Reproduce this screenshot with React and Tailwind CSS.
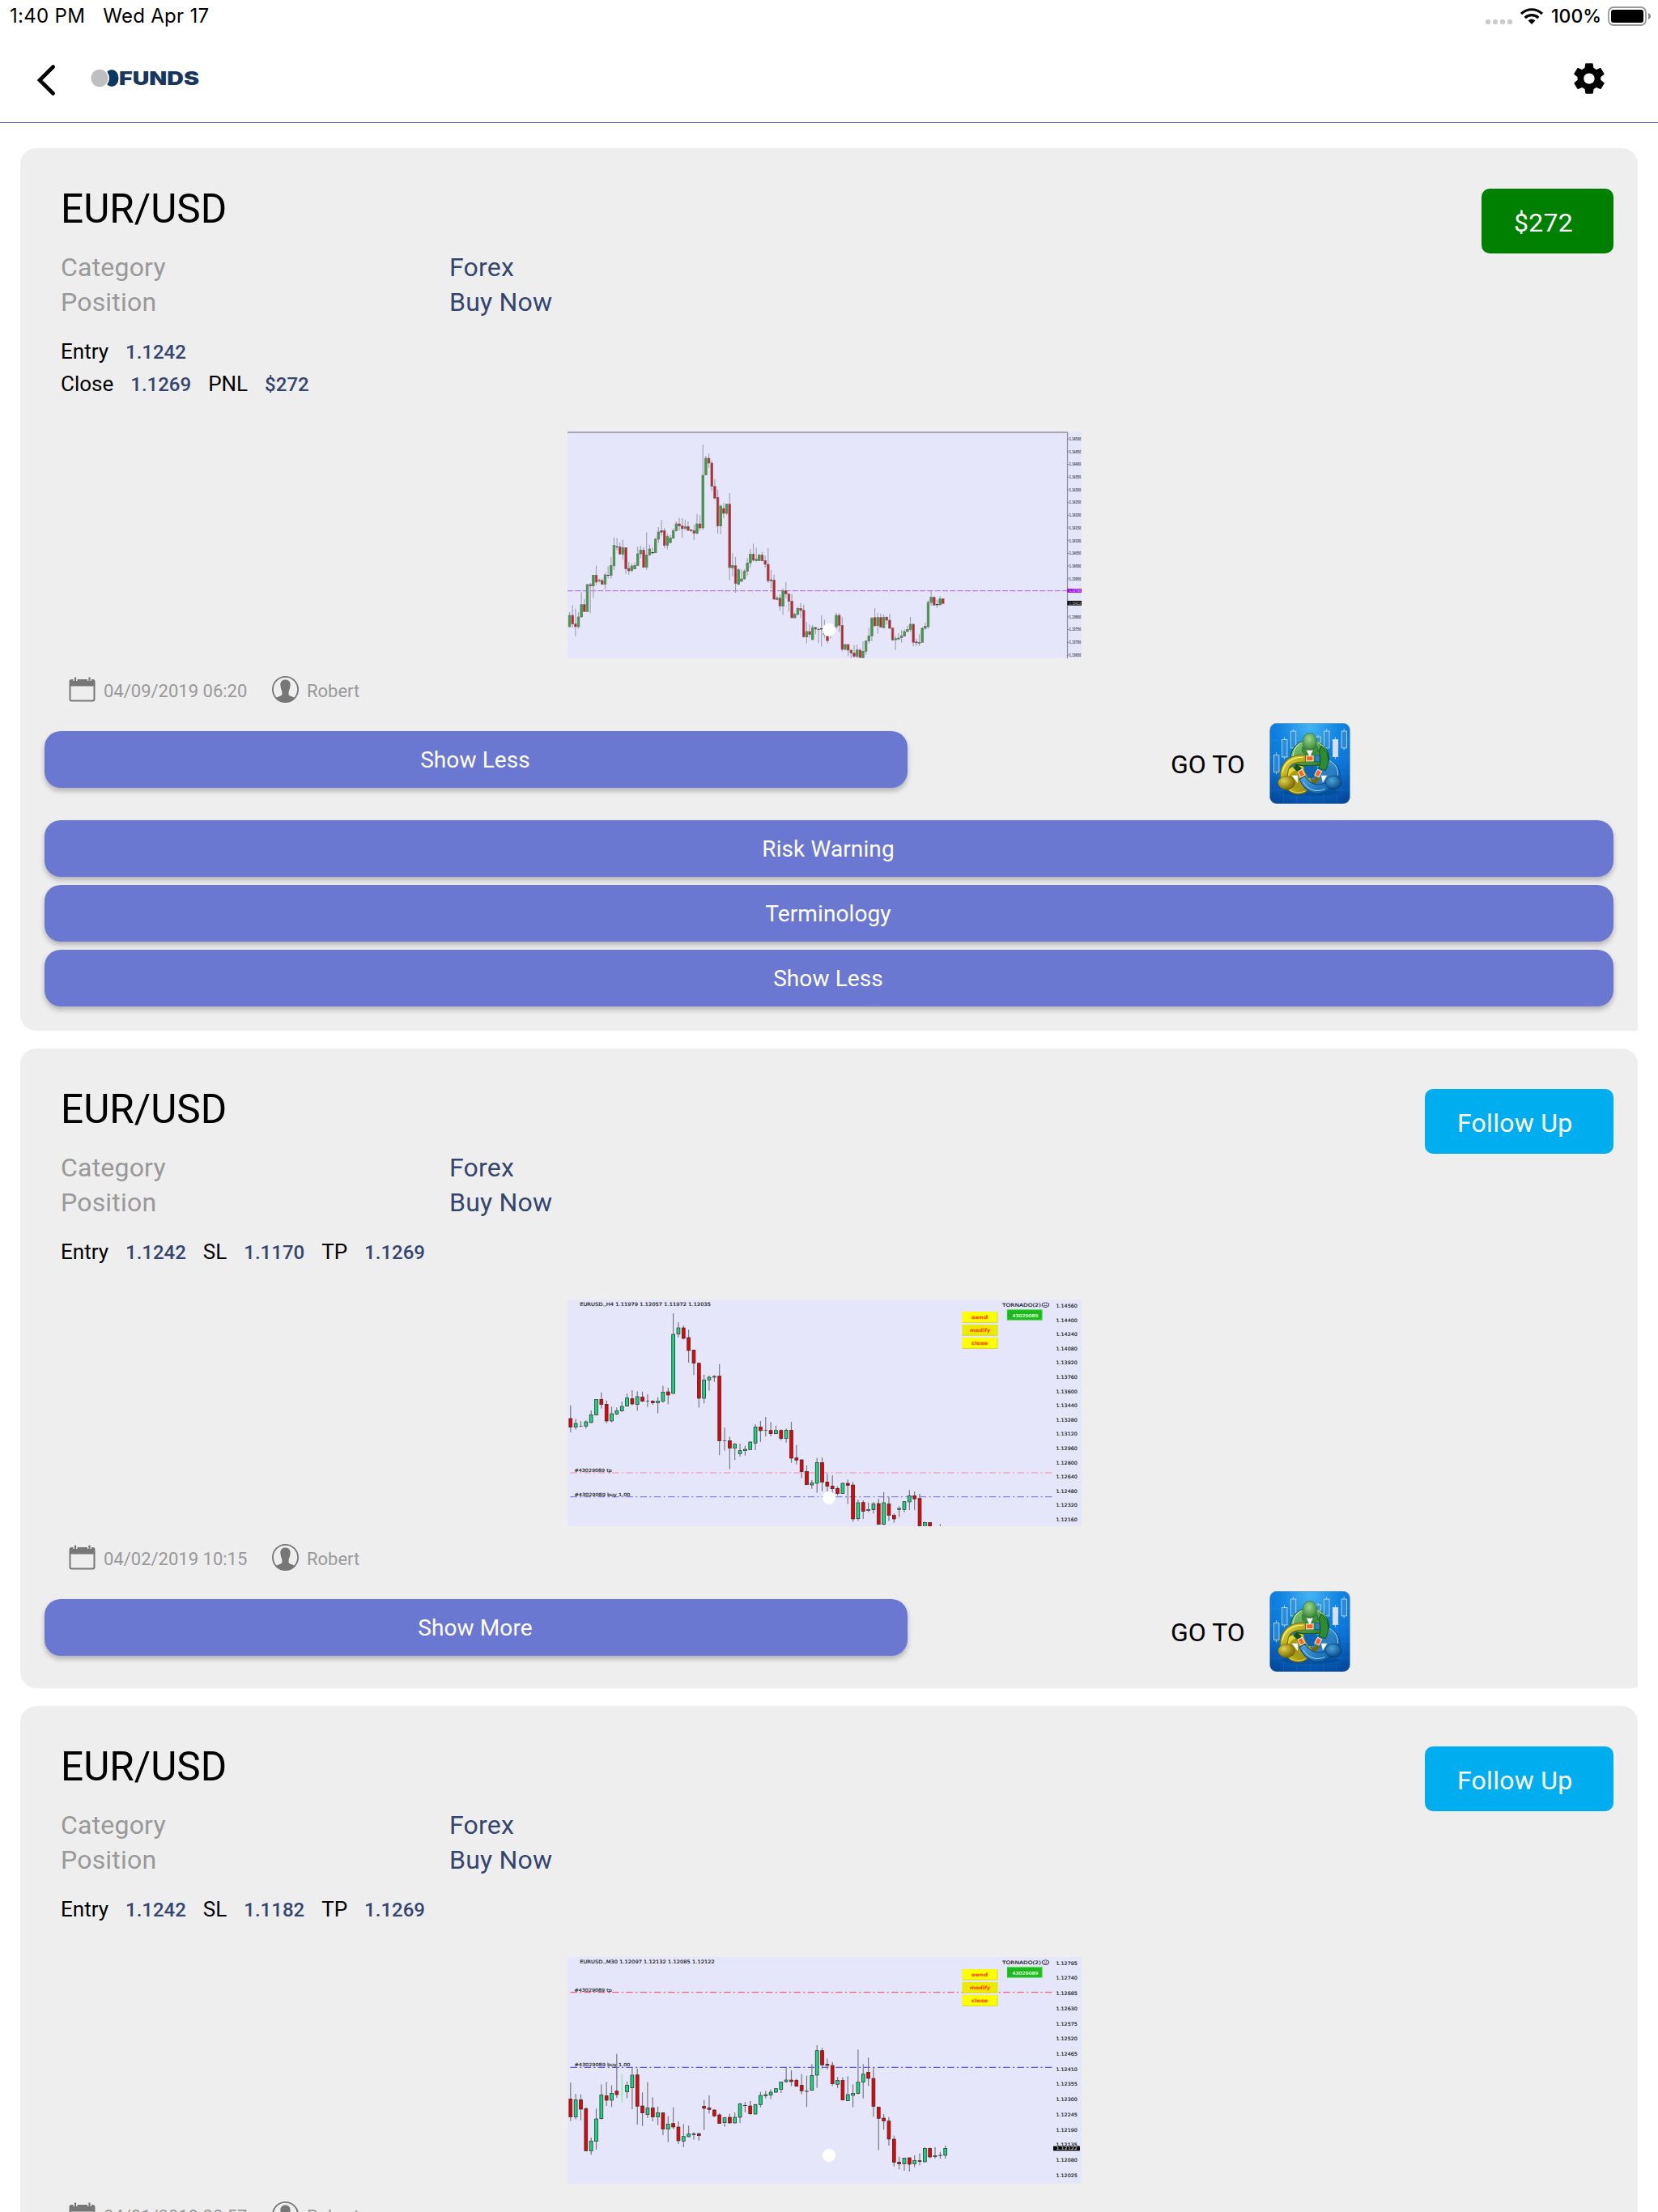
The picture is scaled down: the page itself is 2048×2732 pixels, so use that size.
import React from 'react';
import { IoMdSettings } from 'react-icons/io';

const axisLabels = (from, step, count) =>
    [...Array(count)].map((_, i) => (from - step * i).toFixed(5));

// candles: [colour, high, body top, body bottom, low]
const closedCandles = [
    ['g', 708, 720, 762, 765], ['r', 682, 720, 752, 765], ['r', 695, 752, 762, 798], ['g', 708, 726, 762, 770],
    ['g', 634, 680, 726, 728], ['r', 660, 680, 706, 708], ['g', 603, 606, 706, 708], ['r', 600, 606, 611, 712],
    ['g', 570, 571, 611, 656], ['r', 536, 571, 597, 608], ['g', 584, 590, 593, 598], ['r', 584, 591, 605, 607],
    ['g', 562, 570, 605, 624], ['k', 538, 570, 573, 584], ['g', 504, 535, 572, 584], ['g', 431, 460, 536, 552],
    ['k', 434, 465, 468, 480], ['r', 450, 466, 493, 495], ['g', 440, 469, 493, 514], ['r', 468, 469, 548, 566],
    ['r', 522, 546, 555, 570], ['g', 528, 537, 554, 560], ['g', 524, 535, 548, 550], ['g', 466, 492, 535, 538],
    ['g', 462, 478, 492, 508], ['r', 468, 478, 542, 545], ['g', 412, 496, 542, 552], ['g', 458, 474, 496, 500],
    ['k', 468, 486, 490, 492], ['g', 432, 438, 488, 490], ['g', 393, 411, 438, 452], ['r', 367, 406, 412, 425],
    ['r', 396, 406, 461, 471], ['g', 418, 428, 461, 475], ['g', 422, 433, 451, 453], ['g', 398, 406, 434, 438],
    ['g', 372, 381, 406, 410], ['r', 358, 381, 389, 406], ['r', 360, 388, 399, 432], ['g', 366, 391, 398, 403],
    ['r', 372, 391, 405, 408], ['r', 400, 403, 407, 412], ['r', 384, 406, 416, 441], ['g', 344, 381, 416, 420],
    ['r', 349, 381, 396, 406], ['g', 87, 201, 396, 404], ['g', 129, 138, 199, 202], ['r', 121, 138, 156, 173],
    ['r', 147, 156, 242, 261], ['r', 216, 242, 286, 290], ['r', 254, 283, 389, 417], ['g', 310, 315, 389, 420],
    ['r', 304, 324, 342, 360], ['g', 306, 308, 342, 348], ['r', 267, 308, 543, 590], ['g', 490, 535, 544, 576],
    ['r', 504, 536, 602, 636], ['g', 546, 551, 605, 608], ['g', 550, 585, 594, 597], ['g', 549, 556, 585, 588],
    ['g', 508, 526, 556, 572], ['g', 474, 493, 526, 542], ['r', 454, 493, 516, 520], ['g', 470, 512, 517, 521],
    ['g', 492, 496, 517, 520], ['r', 485, 496, 518, 520], ['r', 499, 517, 531, 543], ['r', 471, 531, 592, 600],
    ['g', 552, 588, 593, 620], ['r', 569, 589, 660, 663], ['g', 648, 656, 661, 664], ['r', 642, 656, 686, 704],
    ['g', 620, 629, 686, 719], ['r', 597, 629, 641, 656], ['r', 638, 641, 668, 706], ['r', 640, 667, 729, 731],
    ['g', 710, 716, 729, 732], ['g', 688, 694, 716, 722], ['r', 674, 694, 702, 730], ['r', 681, 701, 800, 802],
    ['g', 744, 780, 800, 824], ['r', 754, 780, 791, 804], ['g', 756, 765, 810, 812], ['r', 762, 765, 771, 790],
    ['k', 764, 771, 773, 822], ['k', 720, 768, 772, 836], ['r', 736, 775, 790, 803], ['r', 780, 795, 814, 824],
    ['g', 770, 780, 795, 806], ['g', 760, 762, 770, 790], ['g', 710, 720, 762, 770], ['r', 712, 720, 757, 782],
    ['r', 726, 757, 846, 854], ['g', 826, 828, 846, 850], ['r', 828, 828, 849, 872], ['r', 848, 849, 860, 879],
    ['r', 830, 859, 872, 880], ['g', 828, 848, 872, 880], ['r', 842, 849, 876, 880], ['g', 816, 853, 877, 880],
    ['g', 813, 815, 853, 866], ['g', 766, 796, 815, 824], ['g', 726, 730, 796, 816], ['r', 694, 728, 759, 760],
    ['g', 712, 728, 758, 788], ['r', 714, 728, 764, 766], ['g', 716, 727, 766, 768], ['r', 722, 727, 738, 754],
    ['r', 714, 738, 768, 771], ['r', 766, 767, 811, 814], ['g', 796, 806, 811, 848], ['g', 786, 804, 808, 812],
    ['g', 774, 796, 803, 821], ['g', 772, 780, 797, 799], ['g', 758, 772, 780, 782], ['g', 726, 753, 773, 782],
    ['r', 750, 753, 820, 835], ['r', 806, 818, 822, 833], ['g', 790, 820, 824, 834], ['g', 764, 768, 820, 822],
    ['g', 748, 760, 768, 774], ['g', 664, 672, 762, 770], ['g', 630, 653, 672, 684], ['r', 652, 653, 682, 684],
    ['k', 662, 678, 682, 693], ['g', 648, 659, 681, 684], ['r', 657, 659, 676, 679],
];

const h4Candles = [
    ['r', 422, 471, 503, 522], ['g', 472, 489, 503, 512], ['k', 480, 498, 500, 502], ['g', 478, 483, 499, 508],
    ['g', 441, 457, 486, 488], ['g', 400, 400, 458, 460], ['r', 374, 400, 419, 434], ['r', 404, 418, 480, 489],
    ['g', 427, 453, 480, 485], ['g', 430, 442, 454, 458], ['g', 408, 426, 443, 446], ['g', 379, 395, 425, 427],
    ['r', 366, 397, 417, 422], ['g', 370, 390, 419, 442], ['r', 372, 391, 407, 410], ['k', 381, 405, 407, 428],
    ['r', 403, 406, 413, 420], ['g', 392, 406, 413, 452], ['g', 350, 373, 407, 412], ['r', 357, 372, 384, 418],
    ['g', 81, 159, 378, 380], ['g', 114, 135, 158, 170], ['r', 126, 135, 174, 178], ['r', 142, 171, 219, 264],
    ['r', 216, 217, 266, 310], ['r', 264, 266, 396, 430], ['g', 309, 328, 396, 415], ['g', 312, 318, 328, 368],
    ['g', 310, 315, 318, 335], ['r', 269, 314, 554, 607], ['k', 505, 552, 554, 590], ['r', 538, 553, 581, 658],
    ['g', 562, 566, 581, 625], ['g', 564, 590, 601, 612], ['g', 572, 585, 590, 608], ['g', 555, 558, 586, 588],
    ['g', 492, 502, 562, 588], ['r', 480, 502, 516, 558], ['k', 465, 513, 515, 537], ['r', 484, 515, 527, 537],
    ['g', 498, 515, 527, 529], ['r', 511, 515, 545, 552], ['g', 508, 514, 545, 560], ['r', 483, 514, 618, 635],
    ['r', 569, 617, 625, 641], ['r', 622, 624, 668, 692], ['r', 645, 667, 716, 718], ['g', 699, 709, 717, 731],
    ['g', 617, 634, 711, 746], ['r', 616, 634, 707, 741], ['r', 676, 706, 722, 741], ['r', 682, 721, 731, 750],
    ['r', 722, 730, 749, 756], ['g', 709, 711, 749, 750], ['r', 697, 711, 719, 788], ['r', 706, 717, 843, 854],
    ['g', 772, 783, 842, 850], ['r', 774, 782, 815, 843], ['g', 783, 808, 812, 818], ['g', 780, 787, 809, 824],
    ['r', 768, 786, 863, 865], ['g', 744, 783, 863, 866], ['r', 761, 787, 830, 851], ['r', 822, 829, 843, 857],
    ['g', 796, 804, 808, 836], ['g', 778, 779, 808, 818], ['g', 736, 757, 780, 810], ['r', 741, 757, 769, 810],
    ['r', 750, 767, 880, 880], ['g', 853, 856, 880, 880], ['r', 856, 856, 880, 880], ['k', 878, 878, 880, 880],
    ['k', 862, 872, 874, 880],
];

const m30Candles = [
    ['r', 502, 562, 629, 644], ['g', 543, 565, 629, 638], ['r', 545, 565, 600, 641], ['r', 592, 598, 754, 756],
    ['g', 705, 718, 755, 769], ['g', 598, 636, 719, 750], ['g', 508, 547, 635, 638], ['r', 499, 550, 567, 588],
    ['g', 512, 541, 567, 592], ['r', 395, 533, 546, 558], ['l', 470, 543, 545, 575], ['g', 497, 511, 536, 559],
    ['g', 446, 474, 521, 600], ['r', 450, 473, 589, 657], ['r', 538, 588, 614, 662], ['g', 500, 595, 620, 633],
    ['r', 556, 595, 629, 645], ['g', 590, 613, 629, 659], ['r', 612, 613, 674, 696], ['g', 626, 655, 674, 722],
    ['r', 593, 653, 666, 674], ['r', 645, 666, 717, 729], ['g', 655, 701, 718, 741], ['g', 661, 692, 702, 704],
    ['g', 685, 691, 694, 713], ['r', 686, 691, 698, 716], ['r', 566, 589, 597, 677], ['r', 549, 595, 601, 616],
    ['r', 600, 603, 625, 629], ['r', 615, 621, 653, 655], ['g', 629, 632, 650, 665], ['r', 617, 630, 651, 654],
    ['g', 612, 630, 651, 653], ['g', 577, 580, 630, 652], ['k', 574, 585, 588, 612], ['r', 570, 588, 617, 622],
    ['g', 580, 583, 618, 620], ['g', 536, 549, 583, 593], ['g', 532, 546, 551, 560], ['g', 526, 537, 548, 563],
    ['g', 523, 524, 537, 540], ['g', 499, 499, 527, 540], ['g', 443, 492, 498, 502], ['r', 456, 492, 498, 515],
    ['r', 487, 493, 515, 517], ['r', 470, 511, 532, 545], ['k', 476, 532, 535, 592], ['g', 433, 475, 530, 532],
    ['g', 363, 383, 474, 521], ['r', 373, 383, 436, 451], ['r', 412, 433, 438, 453], ['r', 425, 438, 506, 514],
    ['g', 481, 493, 508, 522], ['r', 482, 493, 566, 568], ['g', 478, 546, 569, 571], ['g', 508, 541, 549, 593],
    ['g', 379, 500, 542, 545], ['g', 433, 470, 500, 560], ['r', 409, 463, 486, 514], ['r', 444, 486, 590, 628],
    ['r', 591, 592, 634, 752], ['r', 618, 633, 644, 676], ['r', 630, 644, 711, 735], ['r', 698, 711, 797, 812],
    ['r', 776, 796, 803, 823], ['g', 780, 781, 803, 828], ['r', 779, 780, 804, 831], ['g', 771, 790, 803, 815],
    ['r', 764, 791, 794, 808], ['g', 741, 745, 795, 797], ['r', 742, 745, 777, 782], ['g', 741, 772, 776, 783],
    ['k', 758, 770, 773, 783], ['g', 735, 745, 771, 783],
];

const Candle = ({ x, candle, width, fills, wick, outline }) => {
    const [color, high, top, bottom, low] = candle;
    if (color === 'k' || color === 'l') {
        const stroke = color === 'l' ? '#7dee8e' : wick;
        return (
            <g fill={stroke}>
                <rect x={x - 1.4} y={high} width={2.8} height={low - high} />
                <rect x={x - width / 2} y={top} width={width} height={bottom - top} fill={color === 'l' ? stroke : '#333'} />
            </g>
        );
    }
    return (
        <g>
            <rect x={x - 1.4} y={high} width={2.8} height={low - high} fill={wick} />
            <rect
                x={x - width / 2 + 1}
                y={top}
                width={width - 2}
                height={Math.max(bottom - top, 3)}
                fill={fills[color]}
                stroke={outline}
                strokeWidth={2}
            />
        </g>
    );
};

const Label = ({ x, y, w, size = 18, fill = '#1c1c24', weight, children }) => (
    <text
        x={x}
        y={y}
        fontSize={size}
        fill={fill}
        stroke={fill}
        strokeWidth="0.5"
        fontWeight={weight}
        textLength={w}
        lengthAdjust="spacingAndGlyphs"
    >
        {children}
    </text>
);

const ClosedChart = () => (
    <svg viewBox="26 39 1509 840" preserveAspectRatio="none" className="block w-full h-full font-['DejaVu_Sans',sans-serif]">
        <rect x="26" y="39" width="1509" height="840" fill="#e6e6fa" />
        <rect x="26" y="39" width="1467" height="6" fill="#a5a5b6" />
        <rect x="1492" y="42" width="3" height="837" fill="#8c8c9c" />
        <line x1="26" x2="1493" y1="629" y2="629" stroke="#bb7cec" strokeWidth="3.5" strokeDasharray="17 5" />
        {closedCandles.map((candle, i) => (
            <Candle
                key={i}
                x={32 + i * 8.7}
                candle={candle}
                width={8}
                fills={{ g: '#22b030', r: '#e0101a' }}
                wick="#a3a3b2"
                outline="#77706f"
            />
        ))}
        {axisLabels(1.145, 0.0005, 18).map((label, i) => (
            <g key={label}>
                <rect x="1493" y={65 + i * 47.1} width="5" height="3" fill="#77778a" />
                <Label x={1499} y={72 + i * 47.1} w={34} size={16} fill="#3c3c50">{label}</Label>
            </g>
        ))}
        <rect x="1493" y="621" width="42" height="15" fill="#9a14d6" />
        <Label x={1499} y={634} w={34} size={14} fill="#d79cf5">1.12700</Label>
        <rect x="1493" y="666" width="42" height="17" fill="#111" />
        <Label x={1499} y={680} w={34} size={14} fill="#999">1.12612</Label>
    </svg>
);

const TerminalChart = ({ chart }) => {
    const { top, title, titleWidth, candles, tp, entry, axis, last, soft } = chart;
    return (
        <svg
            viewBox={`26 ${top} 1509 840`}
            preserveAspectRatio="none"
            className="block w-full h-full font-['DejaVu_Sans',sans-serif]"
        >
            <rect x="26" y={top} width="1509" height="840" fill="#e6e6fa" />
            <Label x={62} y={top + 24} w={titleWidth}>{title}</Label>
            <Label x={1302} y={top + 26} w={114}>TORNADO(2)</Label>
            <g fill="none" stroke="#333340" strokeWidth="2.500">
                <ellipse cx="1429" cy={top + 20} rx="10" ry="8.5" />
                <path d={`M1423 ${top + 24}q6 -4 12 0M1425 ${top + 17}h2M1431 ${top + 17}h2`} />
            </g>

            <line x1="34" x2="1450" y1={tp} y2={tp} stroke={soft ? '#f28a9a' : '#f06070'} strokeWidth="3.5" strokeDasharray="20 8 5 8" />
            <line x1="34" x2="1450" y1={entry} y2={entry} stroke={soft ? '#8484ea' : '#5a5ae6'} strokeWidth="3.5" strokeDasharray="20 8 5 8" />
            <Label x={46} y={tp - 3} w={110} size={17}>#43029089 tp</Label>
            <Label x={46} y={entry - 3} w={164} size={17}>#43029089 buy 1.00</Label>

            {candles.map((candle, i) => (
                <Candle
                    key={i}
                    x={35 + i * 15.07}
                    candle={candle}
                    width={11}
                    fills={{ g: '#0fdc80', r: '#ee0000' }}
                    wick="#77777f"
                    outline="#3a2f2f"
                />
            ))}

            {['send', 'modify', 'close'].map((name, i) => (
                <g key={name}>
                    <rect x="1185" y={top + 46 + i * 48} width="104" height="41" fill="#dede30" />
                    <rect x="1185" y={top + 46 + i * 48} width="101" height="37" fill={i === 1 ? '#ebeb00' : '#ffff00'} />
                    <Label x={i === 1 ? 1207 : 1212} y={top + 72 + i * 48} w={i === 1 ? 60 : 48} size={18} fill="#ff4a10" weight="bold">
                        {name}
                    </Label>
                </g>
            ))}
            <rect x="1316" y={top + 37} width="104" height="40" fill="#36d836" />
            <rect x="1318" y={top + 40} width="99" height="34" fill="#1cb81c" />
            <Label x={1332} y={top + 65} w={76} size={16} fill="#e4ffe4">43029089</Label>

            {axis.labels.map((label, i) => (
                <Label key={label} x={1460} y={axis.y + i * axis.gap} w={63}>{label}</Label>
            ))}
            {last && (
                <g>
                    <rect x="1452" y="737" width="78" height="17" fill="#000" />
                    <Label x={1460} y={751} w={63} size={15} fill="#ccc">{last}</Label>
                </g>
            )}
        </svg>
    );
};

const signals = [
    {
        id: 1,
        badge: '$272',
        badgeClass: 'w-[163px] bg-[#008000]',
        rows: [
            [['Entry', '1.1242']],
            [['Close', '1.1269'], ['PNL', '$272']],
        ],
        date: '04/09/2019 06:20',
        toggle: 'Show Less',
        extras: ['Risk Warning', 'Terminology', 'Show Less'],
    },
    {
        id: 2,
        badge: 'Follow Up',
        badgeClass: 'w-[233px] bg-[#00adef]',
        rows: [[['Entry', '1.1242'], ['SL', '1.1170'], ['TP', '1.1269']]],
        date: '04/02/2019 10:15',
        toggle: 'Show More',
        chart: {
            top: 30,
            title: 'EURUSD.,H4  1.11979 1.12057 1.11972 1.12035',
            titleWidth: 385,
            candles: h4Candles,
            tp: 672,
            entry: 761,
            soft: true,
            axis: { labels: axisLabels(1.1456, 0.0016, 16), y: 60, gap: 52.8 },
        },
    },
    {
        id: 3,
        badge: 'Follow Up',
        badgeClass: 'w-[233px] bg-[#00adef]',
        rows: [[['Entry', '1.1242'], ['SL', '1.1182'], ['TP', '1.1269']]],
        date: '04/01/2019 20:57',
        toggle: 'Show More',
        chart: {
            top: 36,
            title: 'EURUSD.,M30  1.12097 1.12132 1.12085 1.12122',
            titleWidth: 396,
            candles: m30Candles,
            tp: 167,
            entry: 445,
            axis: { labels: axisLabels(1.12795, 0.00055, 15), y: 65, gap: 56.15 },
            last: '1.12122',
        },
    },
];

const CalendarIcon = () => (
    <svg viewBox="0 0 33 31" className="w-[33px] h-[31px] text-[#777]">
        <path d="M3.5 3H29.500a3 3 0 0 1 3 3V27.500a3 3 0 0 1-3 3H3.500a3 3 0 0 1-3-3V6a3 3 0 0 1 3-3zM2.500 11.500V27.500a1 1 0 0 0 1 1H29.500a1 1 0 0 0 1-1V11.500z" fill="currentColor" fillRule="evenodd" />
        <path d="M8 0v5M25.500 0v5" stroke="#eee" strokeWidth="5" />
        <path d="M8 .5v4.500M25.500 .5v4.500" stroke="currentColor" strokeWidth="2.200" />
    </svg>
);

const PersonIcon = () => (
    <svg viewBox="0 0 33 33" className="w-[33px] h-[33px] text-[#777]">
        <circle cx="16.500" cy="16.500" r="15.600" fill="none" stroke="currentColor" strokeWidth="1.800" />
        <path d="M16.500 4.400c4 0 6.300 2.600 6.100 6.500-.1 3.300-.9 4.900-1.500 6.900-.7 2-.7 3.900-.3 5.300.4 1.500 3.400 2 6.400 3.300l1.300.8C26 30.500 21.500 32.300 16.500 32.300S7 30.500 4.500 27.200l1.300-.8c3-1.300 6-1.800 6.400-3.300.4-1.400.4-3.300-.3-5.300-.6-2-1.400-3.600-1.500-6.900-.2-3.900 2.100-6.500 6.100-6.500z" fill="currentColor" />
    </svg>
);

// [x, body top, body bottom, high, low]
const traderCandles = [
    [111, 157, 219, 147, 228],
    [141, 100, 164, 91, 172],
    [173, 69, 131, 60, 131],
    [265, 90, 110, 82, 110],
    [296, 69, 131, 60, 131],
    [328, 100, 163, 91, 172],
    [360, 69, 131, 60, 139],
];

const TraderIcon = () => (
    <svg viewBox="86 39 297 298" className="w-[100px] h-[100px]">
        <defs>
            <radialGradient id="sky" cx=".5" cy=".05" r="1">
                <stop offset="0" stopColor="#45b4f4" />
                <stop offset=".35" stopColor="#1285e2" />
                <stop offset=".65" stopColor="#0a72d6" />
                <stop offset="1" stopColor="#044a9e" />
            </radialGradient>
            <radialGradient id="greenHead" cx=".45" cy=".35" r=".65">
                <stop offset="0" stopColor="#9dd68e" />
                <stop offset="1" stopColor="#37873a" />
            </radialGradient>
            <radialGradient id="yellowHead" cx=".35" cy=".35" r=".7">
                <stop offset="0" stopColor="#e0d24c" />
                <stop offset="1" stopColor="#786500" />
            </radialGradient>
            <radialGradient id="blueHead" cx=".4" cy=".35" r=".7">
                <stop offset="0" stopColor="#4aa6dc" />
                <stop offset="1" stopColor="#04447e" />
            </radialGradient>
            <linearGradient id="greenBody" x2="1" y2="1">
                <stop offset="0" stopColor="#8fce80" />
                <stop offset="1" stopColor="#1e7422" />
            </linearGradient>
            <linearGradient id="yellowBody" x2="1" y2="1">
                <stop offset="0" stopColor="#f4e73c" />
                <stop offset="1" stopColor="#8c7e08" />
            </linearGradient>
            <linearGradient id="blueBody" x2="1" y2="1">
                <stop offset="0" stopColor="#4aa8e4" />
                <stop offset="1" stopColor="#0c5ca4" />
            </linearGradient>
        </defs>
        <rect x="87" y="40" width="295" height="296" rx="25" fill="url(#sky)" stroke="#7d9cc0" strokeWidth="1.500" />
        <path d="M137 40V336M186 40V336M235 40V336M284 40V336M333 40V336M87 103H382M87 164H382M87 225H382M87 286H382" stroke="#5ab4f5" strokeWidth="1.500" opacity=".25" />
        {traderCandles.map(([x, top, bottom, high, low]) => (
            <g key={x} stroke="#c4def5" strokeWidth="2.500">
                <path d={`M${x} ${high}V${top}M${x} ${bottom}V${low}`} />
                <rect x={x - 9} y={top} width="19" height={bottom - top} fill={x === 328 ? '#dcdfee' : '#3b93dc'} fillOpacity={x === 328 ? 1 : 0.6} />
            </g>
        ))}
        <ellipse cx="236" cy="292" rx="106" ry="16" fill="#023a78" opacity=".35" />
        {/* seated bodies, open in the middle */}
        <circle cx="192" cy="248" r="44" fill="none" stroke="#6c5f04" strokeWidth="21" />
        <circle cx="192" cy="248" r="44" fill="#a89a18" stroke="url(#yellowBody)" strokeWidth="16" />
        <circle cx="292" cy="230" r="44" fill="none" stroke="#0a467f" strokeWidth="21" />
        <circle cx="292" cy="230" r="44" fill="#2a7fc4" stroke="url(#blueBody)" strokeWidth="16" />
        <path d="M302 176c24 9 36 30 35 55" fill="none" stroke="#8fcdf4" strokeWidth="3" />
        <path d="M163 172c0-42 30-68 71-68s71 28 71 70c-4 16-30 22-71 22s-68-8-71-24z" fill="url(#greenBody)" stroke="#14591a" strokeWidth="3" />
        <path d="M172 162c3-30 18-48 40-53M256 109c26 7 40 27 43 53" fill="none" stroke="#c4ebb8" strokeWidth="3" />
        <path d="M207 124l27 26 27-26 3 20-30 22-28-22z" fill="#3d8f40" stroke="#1d6623" strokeWidth="2" />
        <path d="M222 139h24l-12 25z" fill="#fff" />
        <path d="M212 198h48l6 14-18 30h-20l-16-30z" fill="#0f63b4" />
        {/* arms reaching for the next card */}
        <path d="M218 157v26c-34-2-57 8-63 28l-4 28-25 6c-4-46 20-92 92-88z" fill="url(#yellowBody)" stroke="#75680a" strokeWidth="3" />
        <path d="M134 222c4-38 34-57 76-57" fill="none" stroke="#fdf78e" strokeWidth="3" />
        <path d="M160 286c17 10 42 12 58 2" fill="none" stroke="#e6dc68" strokeWidth="3" />
        <path d="M277 124c28 20 32 60 14 90l-24-9c8-18 10-45 0-62z" fill="#2f8a32" stroke="#14591a" strokeWidth="3" />
        <path d="M172 202l16-12 16 16-12 16z" fill="#135321" />
        <path d="M242 254l16-20 14 10-16 20z" fill="#75680a" />
        <path d="M196 246l20-12c20 30 48 38 78 25l18 18c-36 36-92 26-116-31z" fill="url(#blueBody)" stroke="#0b4a85" strokeWidth="3" />
        <path d="M210 256c16 28 47 40 80 26" fill="none" stroke="#8ecbf2" strokeWidth="3" />
        <path d="M253 157h17v24h-17z" fill="#2b85cc" stroke="#0a467f" strokeWidth="2" />
        <path d="M168 232h22v28zM298 232h-22l6 26z" fill="#fff" />
        {/* id cards */}
        <g fill="#f7f1ec">
            <rect x="220" y="159" width="28" height="21" />
            <rect x="193" y="211" width="20" height="26" transform="rotate(-28 203 224)" />
            <rect x="255" y="211" width="20" height="26" transform="rotate(28 265 224)" />
        </g>
        <g fill="#fb641a">
            <rect x="223" y="162" width="22" height="15" />
            <rect x="196" y="214" width="14" height="20" transform="rotate(-28 203 224)" />
            <rect x="258" y="214" width="14" height="20" transform="rotate(28 265 224)" />
        </g>
        {/* heads */}
        <ellipse cx="234" cy="107" rx="26" ry="31" fill="url(#greenHead)" stroke="#27702b" strokeWidth="2" />
        <ellipse cx="148" cy="259" rx="31" ry="25" fill="url(#yellowHead)" stroke="#6a5c04" strokeWidth="2" />
        <ellipse cx="321" cy="258" rx="30" ry="25" fill="url(#blueHead)" stroke="#063c6e" strokeWidth="2" />
    </svg>
);

const StatusBar = () => (
    <div className="flex shrink-0 justify-between h-10 pl-3 pr-[9px] pt-2 font-[Inter,sans-serif] text-[23px] leading-6 font-medium">
        <div className="flex gap-[22px] text-2xl leading-6 tracking-[0.3px] font-normal">
            <span>1:40 PM</span>
            <span>Wed Apr 17</span>
        </div>
        <div className="flex">
            <div className="flex gap-[3px] mt-4 mr-[10px]">
                {[...Array(4)].map((_, i) => (
                    <span key={i} className="size-[6px] rounded-[2px] bg-[#cbcbcb]" />
                ))}
            </div>
            <svg viewBox="0 0 28 20" className="w-7 h-5 mt-[2px]">
                <g fill="none" stroke="#000" strokeWidth="3.200">
                    <path d="M1 7.100a18.500 18.500 0 0 1 26 0" />
                    <path d="M5.700 12a12 12 0 0 1 16.600 0" />
                </g>
                <path d="M9.600 15.400a6.300 6.300 0 0 1 8.800 0L14 20z" />
            </svg>
            <span className="ml-[10px] w-[64px]">100%</span>
            <svg viewBox="0 0 53 24" className="ml-[6px] w-[53px] h-6">
                <rect x="1" y="1" width="46" height="22" rx="6" fill="none" stroke="#9a9a9a" strokeWidth="1.800" />
                <rect x="4" y="4" width="40" height="16" rx="3" />
                <path d="M50 8c4 1.500 4 6.500 0 8z" fill="#8a8a8a" />
            </svg>
        </div>
    </div>
);

const NavBar = () => (
    <div className="flex shrink-0 items-center h-28 pt-[3px] pl-[45px] pr-[62px] border-b border-[#3f56a6]">
        <svg viewBox="0 0 24 40" className="w-6 h-10 mt-1">
            <path d="M20.700 3.500L4 20l16.700 16.500" fill="none" stroke="#000" strokeWidth="4.600" strokeLinecap="round" />
        </svg>
        <svg viewBox="0 0 136 24" className="ml-[43px] w-[136px] h-6 mb-px overflow-visible">
            <ellipse cx="26" cy="11.500" rx="8.500" ry="10.500" fill="#0b3763" />
            <ellipse cx="11" cy="11.500" rx="12" ry="12" fill="#fff" />
            <ellipse cx="11" cy="11.500" rx="10.500" ry="10.800" fill="#bfbfbf" />
            <text x="35" y="19.500" textLength="99" lengthAdjust="spacingAndGlyphs" fontSize="22.500" fontWeight="900" fill="#17375f" className="font-[Inter,sans-serif]">
                FUNDS
            </text>
        </svg>
        <IoMdSettings className="ml-auto size-[46px]" />
    </div>
);

const ActionButton = ({ className = '', children }) => (
    <button className={`h-[70px] pt-[2px] pr-[2px] rounded-[20px] bg-[#6a78d1] text-white text-[28px] tracking-[0.1px] shadow-[0_4px_6px_rgba(0,0,0,0.25)] ${className}`}>
        {children}
    </button>
);

const SignalCard = ({ signal }) => (
    <div className="shrink-0 rounded-[20px] rounded-br-[3px] bg-[#eee] pl-[30px] pr-[30px] pb-5">
        <div className="flex justify-between items-start">
            <div className="pl-5 pt-[47px]">
                <h2 className="text-[49.5px] leading-[56px]">EUR/USD</h2>
                <div className="grid grid-cols-[480px_auto] mt-[23px] text-[32px] tracking-[0.2px] leading-[43px] text-[#34466f]">
                    <span className="text-[#999]">Category</span>
                    <span>Forex</span>
                    <span className="text-[#999]">Position</span>
                    <span>Buy Now</span>
                </div>
                <div className="mt-[19px] leading-10">
                    {signal.rows.map((row, i) => (
                        <div key={i} className="flex items-baseline h-10 gap-[21px]">
                            {row.map(([label, value]) => (
                                <React.Fragment key={label}>
                                    <span className="text-[26px]">{label}</span>
                                    <span className="text-2xl leading-10 font-medium text-[#34466f]">{value}</span>
                                </React.Fragment>
                            ))}
                        </div>
                    ))}
                </div>
            </div>
            <div className={`mt-[50px] h-20 rounded-[10px] pl-10 pt-[2px] leading-[80px] text-[32px] tracking-[0.25px] text-white ${signal.badgeClass}`}>
                {signal.badge}
            </div>
        </div>

        <div className="relative mt-[39px] ml-[646px] w-[635px] h-[280px]">
            {signal.chart ? <TerminalChart chart={signal.chart} /> : <ClosedChart />}
            <span className="absolute left-[315px] top-[237px] size-4 rounded-full bg-white" />
        </div>

        <div className="flex items-center mt-[21px] h-[34px] pl-[30px] text-[22px] text-[#999]">
            <CalendarIcon />
            <span className="ml-[10px] w-[178px] pt-1 whitespace-nowrap">{signal.date}</span>
            <span className="ml-[30px]"><PersonIcon /></span>
            <span className="ml-[10px] pt-1">Robert</span>
        </div>

        <div className="flex items-start mt-[25px] h-[100px]">
            <ActionButton className="mt-[10px] w-[1066px]">{signal.toggle}</ActionButton>
            <span className="ml-[325px] w-[122px] leading-[103px] text-[32px] whitespace-nowrap">GO TO</span>
            <TraderIcon />
        </div>

        {signal.extras && (
            <div className="flex flex-col gap-[10px] mt-5 pb-[10px]">
                {signal.extras.map((name) => (
                    <ActionButton key={name}>{name}</ActionButton>
                ))}
            </div>
        )}
    </div>
);

const App = () => {
    return (
        <div className="flex flex-col w-[2048px] h-[2732px] overflow-hidden bg-white text-black font-[Roboto,sans-serif]">
            <StatusBar />
            <NavBar />
            <div className="flex flex-col gap-[22px] pt-[31px] pl-[25px] pr-[25px]">
                {signals.map((signal) => (
                    <SignalCard key={signal.id} signal={signal} />
                ))}
            </div>
        </div>
    );
};

export default App;
